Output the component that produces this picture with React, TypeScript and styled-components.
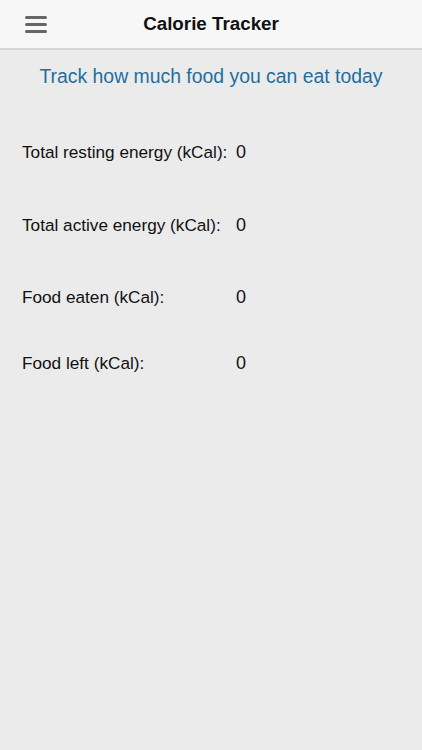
import styled, { createGlobalStyle } from "styled-components";

const GlobalStyle = createGlobalStyle`
  html, body {
    margin: 0;
    padding: 0;
    background: #ebebeb;
    font-family: "Liberation Sans", Arial, sans-serif;
  }
`;

const Screen = styled.div`
  width: 422px;
  height: 750px;
  background: #ebebeb;
  display: flex;
  flex-direction: column;
`;

const Header = styled.header`
  height: 48px;
  background: #f7f7f7;
  border-bottom: 2px solid #d6d6d6;
  display: flex;
  align-items: center;
  justify-content: center;
  position: relative;
`;

const MenuButton = styled.div`
  position: absolute;
  left: 25px;
  top: 16px;
  width: 22px;
  display: flex;
  flex-direction: column;
  gap: 4px;
  span {
    height: 3px;
    border-radius: 2px;
    background: #666;
  }
`;

const Title = styled.h1`
  margin: 0;
  font-size: 18.8px;
  font-weight: 600;
  color: #111;
`;

const Subtitle = styled.p`
  margin: 15px 0 0;
  text-align: center;
  font-size: 19.4px;
  color: #1f6f9f;
`;

const Stats = styled.div`
  display: flex;
  flex-direction: column;
  padding: 0 22px;
  margin-top: 54px;
`;

const Row = styled.div<{ gap: number }>`
  display: grid;
  grid-template-columns: 214px 1fr;
  align-items: center;
  font-size: 17.2px;
  color: #111;
  height: 20px;
  white-space: nowrap;
  margin-bottom: ${({ gap }) => gap}px;
`;

const Value = styled.span`
  font-size: 18px;
`;

const rows = [
  { label: "Total resting energy (kCal):", value: 0, gap: 53 },
  { label: "Total active energy (kCal):", value: 0, gap: 52 },
  { label: "Food eaten (kCal):", value: 0, gap: 46 },
  { label: "Food left (kCal):", value: 0, gap: 0 },
];

export default function App() {
  return (
    <>
      <GlobalStyle />
      <Screen>
        <Header>
          <MenuButton>
            <span />
            <span />
            <span />
          </MenuButton>
          <Title>Calorie Tracker</Title>
        </Header>
        <Subtitle>Track how much food you can eat today</Subtitle>
        <Stats>
          {rows.map((r) => (
            <Row key={r.label} gap={r.gap}>
              <span>{r.label}</span>
              <Value>{r.value}</Value>
            </Row>
          ))}
        </Stats>
      </Screen>
    </>
  );
}
